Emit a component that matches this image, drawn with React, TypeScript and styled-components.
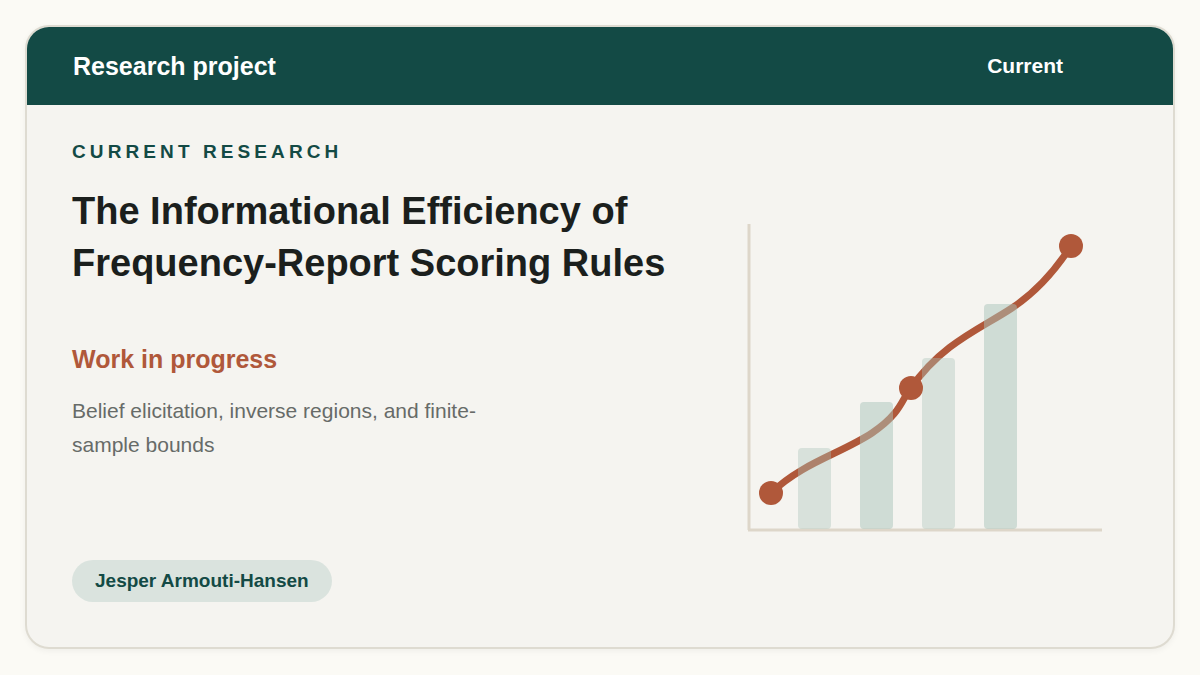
import React from "react";
import styled, { createGlobalStyle } from "styled-components";

const Global = createGlobalStyle`
  html, body { margin: 0; padding: 0; background: #fbfaf5; }
  body { font-family: "Liberation Sans", Arial, sans-serif; }
`;

const Page = styled.div`
  width: 1200px; height: 675px; box-sizing: border-box; padding: 25px 25px 26px 25px;
`;
const Card = styled.div`
  height: 100%; box-sizing: border-box; border: 2px solid #dedbd1; border-radius: 24px;
  background: #f5f4f0; overflow: hidden; display: flex; flex-direction: column;
  box-shadow: 0 2px 6px rgba(0,0,0,0.05);
`;
const Header = styled.div`
  height: 78px; background: #134a45; color: #fff; display: flex; align-items: center;
  justify-content: space-between; padding: 0 110px 0 46px; font-weight: 700;
`;
const HTitle = styled.div` font-size: 25px; `;
const HStatus = styled.div` font-size: 21px; `;
const Body = styled.div` flex: 1; display: flex; padding: 0 0 0 45px; `;
const Left = styled.div` width: 670px; display: flex; flex-direction: column; `;
const Eyebrow = styled.div`
  margin-top: 36px; font-size: 19px; font-weight: 700; letter-spacing: 4.1px; color: #134a45;
`;
const Title = styled.h1`
  margin: 22px 0 0; font-size: 38px; line-height: 52px; font-weight: 700; color: #1b1f1d; white-space: nowrap;
`;
const Status = styled.div` margin-top: 56px; font-size: 25px; font-weight: 700; color: #b0583a; `;
const Desc = styled.div` margin-top: 20px; font-size: 21px; line-height: 34px; color: #676b68; width: 440px; `;
const Pill = styled.div`
  margin-top: auto; margin-bottom: 45px; align-self: flex-start; background: #dae3de; color: #134a45;
  font-weight: 700; font-size: 19px; padding: 0 23px; height: 42px; line-height: 42px; border-radius: 21px;
`;
const Chart = styled.svg` margin-top: 113px; `;

export default function App() {
  const bars = [[796, 450, 0.75], [858, 404, 1], [920, 360, 0.75], [982, 306, 1]];
  return (
    <Page>
      <Global />
      <Card>
        <Header><HTitle>Research project</HTitle><HStatus>Current</HStatus></Header>
        <Body>
          <Left>
            <Eyebrow>CURRENT RESEARCH</Eyebrow>
            <Title>The Informational Efficiency of<br />Frequency-Report Scoring Rules</Title>
            <Status>Work in progress</Status>
            <Desc>Belief elicitation, inverse regions, and finite-sample bounds</Desc>
            <Pill>Jesper Armouti-Hansen</Pill>
          </Left>
          <Chart width="370" height="320" viewBox="740 220 370 320">
            <line x1="747" y1="226" x2="747" y2="532" stroke="#ddd6c9" strokeWidth="3" />
            <line x1="746" y1="532" x2="1100" y2="532" stroke="#ddd6c9" strokeWidth="3" />
            <path d="M769 495 C 800 465, 840 455, 870 435 S 900 400, 909 390 C 940 345, 980 330, 1010 310 S 1060 262, 1069 248"
              fill="none" stroke="#b0583a" strokeWidth="7" strokeLinecap="round" />
            {bars.map(([x, y, o], i) => (
              <rect key={i} x={x} y={y} width="33" height={531 - (y as number)} rx="4" fill="#a9c4ba" opacity={0.45 * (o as number) + 0.05} />
            ))}
            <circle cx="769" cy="495" r="12" fill="#b0583a" />
            <circle cx="909" cy="390" r="12" fill="#b0583a" />
            <circle cx="1069" cy="248" r="12" fill="#b0583a" />
          </Chart>
        </Body>
      </Card>
    </Page>
  );
}
